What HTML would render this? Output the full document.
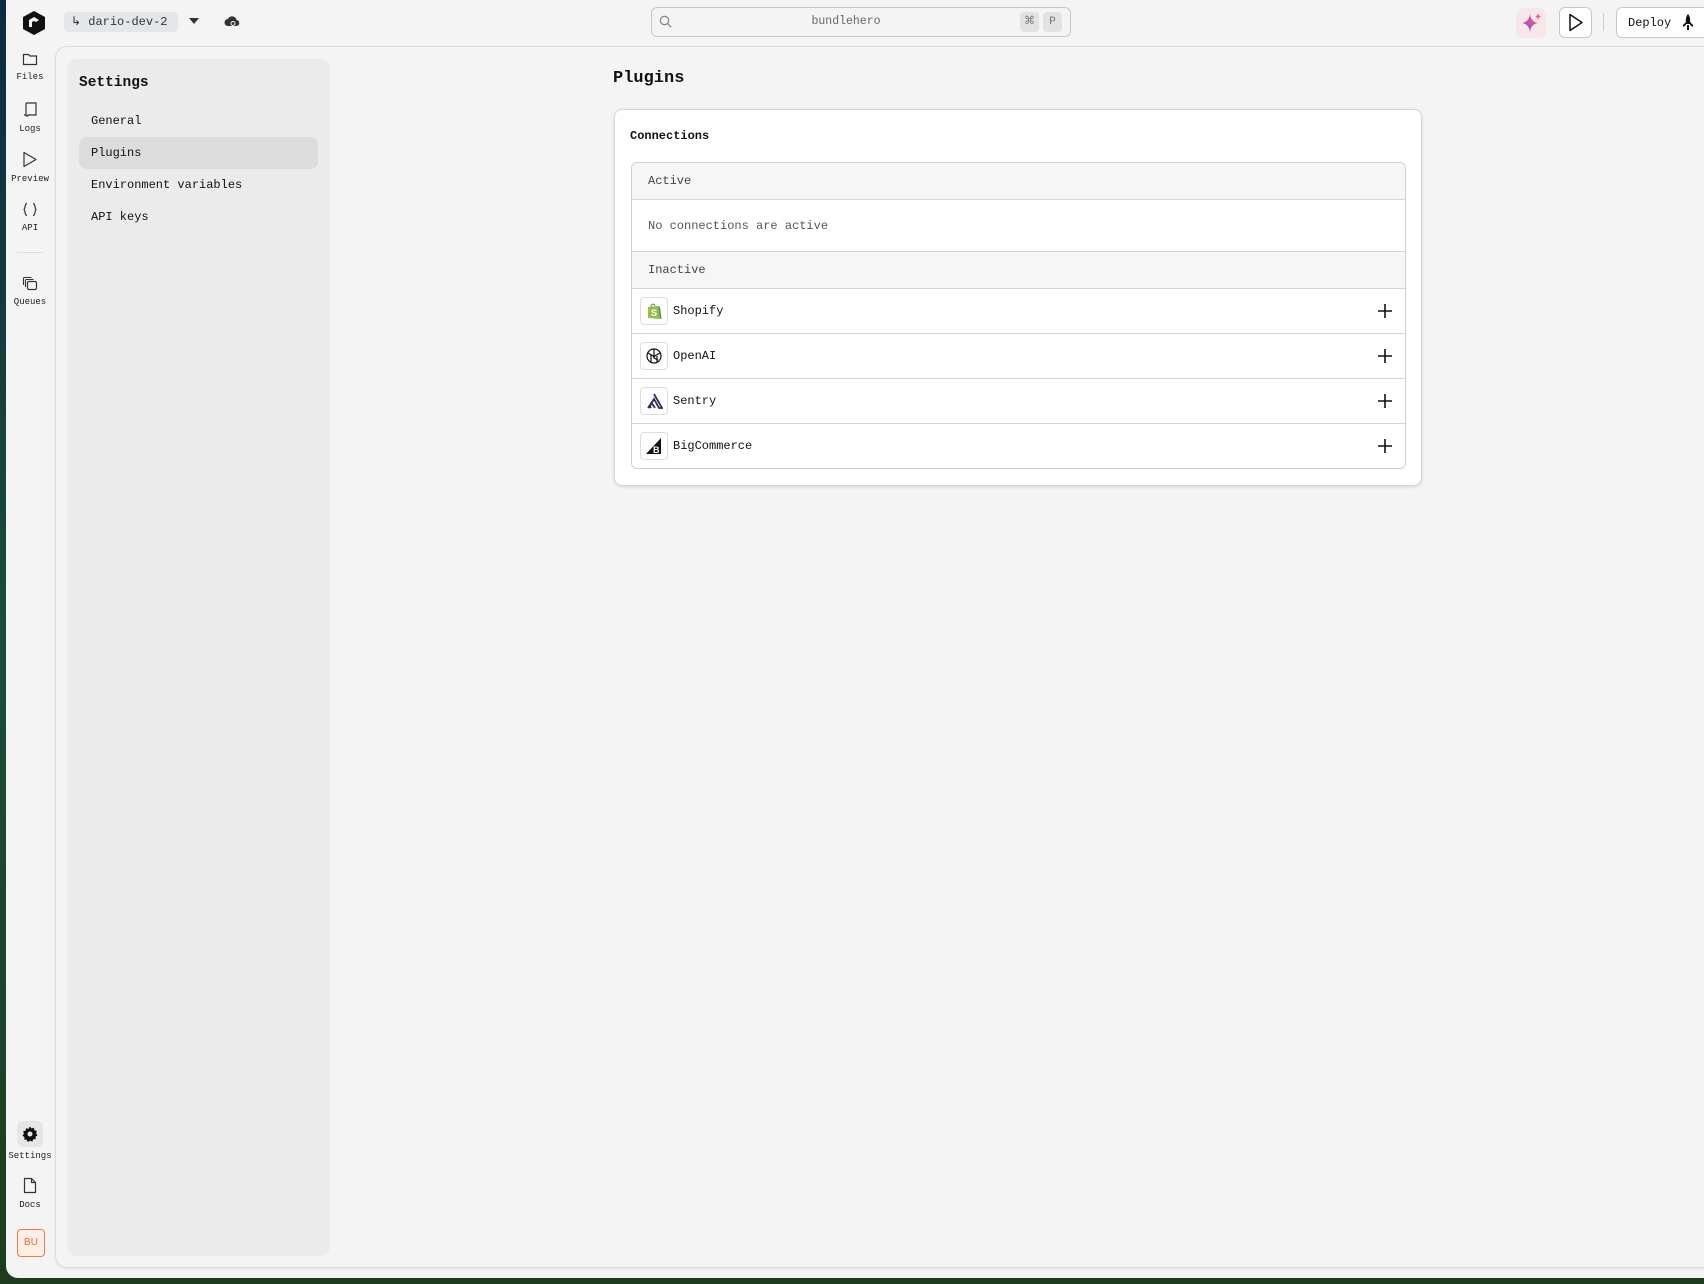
<!DOCTYPE html>
<html><head><meta charset="utf-8"><style>
*{box-sizing:border-box;margin:0;padding:0}
body{width:1704px;height:1284px;overflow:hidden;background:linear-gradient(180deg,#0d2a44 0%,#1a4d3a 50%,#1d3d1d 100%);font-family:"Liberation Mono",monospace;color:#111;position:relative}
.win{position:absolute;left:6px;top:0;width:1698px;height:1278px;background:#f4f4f4;border-bottom-left-radius:12px}
.abs{position:absolute}
.rail{position:absolute;left:0;width:48px;text-align:center;font-size:9px;color:#222}
.rail svg{display:block;margin:0 auto 6px}
.panel{position:absolute;left:55px;top:46px;width:1660px;height:1222px;border:1px solid #dcdcdc;border-radius:12px;background:#f4f4f4;box-shadow:0 1px 2px rgba(0,0,0,.08)}
.side{position:absolute;left:67px;top:59px;width:263px;height:1197px;background:#ebebeb;border-radius:10px}
.nav{position:absolute;left:12px;width:239px;height:32px;line-height:33px;padding-left:12px;font-size:12px;border-radius:8px}
.card{position:absolute;left:614px;top:109px;width:808px;height:377px;background:#fff;border:1px solid #d6d6d6;border-radius:8px;box-shadow:0 1px 3px rgba(0,0,0,.12)}
.tbl{position:absolute;left:16px;top:52px;width:775px;height:307px;border:1px solid #cfcfcf;border-radius:6px;overflow:hidden}
.row{position:absolute;left:0;width:100%;border-bottom:1px solid #d6d6d6;font-size:12px}
.hdr{background:#f6f6f6;color:#444;padding-left:16px}
.ico{position:absolute;left:8px;top:8px;width:28px;height:28px;border:1px solid #ddd;border-radius:4px;display:flex;align-items:center;justify-content:center}
.nm{position:absolute;left:41px;top:0;line-height:45px}
.plus{position:absolute;right:12px;top:14px}
</style></head><body>
<div class="win">
 <svg class="abs" style="left:15px;top:10px" width="26" height="26" viewBox="0 0 26 26"><path d="M13 1L24 7v12l-11 6L2 19V7z" fill="#111"/><path d="M8 17V10l5-3 5 3-3 2-2-1-2 1v5z" fill="#f4f4f4"/></svg>
 <div class="abs" style="left:58px;top:12px;width:114px;height:20px;background:#e3e6ea;border-radius:4px;font-size:12px;line-height:21px;color:#333;padding-left:7px">↳ dario-dev-2</div>
 <svg class="abs" style="left:183px;top:18px" width="10" height="6"><path d="M0 0h10L5 6z" fill="#333"/></svg>
 <svg class="abs" style="left:218px;top:14px" width="16" height="13" viewBox="0 0 16 13"><path d="M4 12a3.5 3.5 0 010-7 4.5 4.5 0 018.5 1A3 3 0 0112 12z" fill="#333"/><circle cx="9" cy="9.5" r="2" fill="none" stroke="#f4f4f4" stroke-width="1"/></svg>
 <div class="abs" style="left:645px;top:7px;width:420px;height:30px;border:1px solid #c8c8c8;border-radius:6px;background:#f4f4f4"></div>
 <svg class="abs" style="left:653px;top:15px" width="13" height="13"><circle cx="5.5" cy="5.5" r="4.2" fill="none" stroke="#888" stroke-width="1.3"/><path d="M8.7 8.7l3.5 3.5" stroke="#888" stroke-width="1.3"/></svg>
 <div class="abs" style="left:640px;top:15px;width:400px;text-align:center;font-size:11.5px;color:#666">bundlehero</div>
 <div class="abs" style="left:1014px;top:12px;width:19px;height:20px;background:#e2e2e2;border-radius:4px;font-size:11px;line-height:20px;text-align:center;color:#777">⌘</div>
 <div class="abs" style="left:1037px;top:12px;width:19px;height:20px;background:#e2e2e2;border-radius:4px;font-size:11px;line-height:20px;text-align:center;color:#777">P</div>
 <div class="abs" style="left:1510px;top:8px;width:30px;height:30px;background:#f7e6ea;border-radius:6px"></div>
 <svg class="abs" style="left:1514px;top:11px" width="24" height="24" viewBox="0 0 24 24"><defs><linearGradient id="g" x1="0" y1="1" x2="1" y2="0"><stop offset="0" stop-color="#8a4fe0"/><stop offset="1" stop-color="#ff5a7a"/></linearGradient></defs><path d="M10 3Q11 11 18 12Q11 13 10 21Q9 13 2 12Q9 11 10 3z" fill="url(#g)"/><path d="M18 2Q18.5 5 21 5.5Q18.5 6 18 9Q17.5 6 15 5.5Q17.5 5 18 2z" fill="#ff5a7a"/></svg>
 <div class="abs" style="left:1553px;top:7px;width:33px;height:31px;border:1px solid #c8c8c8;border-radius:6px;background:#fff"></div>
 <svg class="abs" style="left:1562px;top:13px" width="16" height="19"><path d="M2 1.5L14 9.5 2 17.5z" fill="none" stroke="#111" stroke-width="1.5" stroke-linejoin="round"/></svg>
 <div class="abs" style="left:1597px;top:13px;width:1px;height:18px;background:#d0d0d0"></div>
 <div class="abs" style="left:1610px;top:7px;width:100px;height:31px;border:1px solid #c8c8c8;border-radius:6px;background:#fff;font-size:12px;line-height:30px;padding-left:11px">Deploy</div>
 <svg class="abs" style="left:1676px;top:14px" width="12" height="17" viewBox="0 0 12 17"><path d="M6 0C8 2 8.5 5 8 10H4C3.5 5 4 2 6 0z M4 8L1 11V13L4 11z M8 8l3 3v2L8 11z M5 11h2v5H5z" fill="#111"/></svg>

 <div class="rail" style="top:52px"><svg width="16" height="14" viewBox="0 0 16 14"><path d="M1.5 2.5h5l1.5 1.5h6.5v8.5h-13z" fill="none" stroke="#333" stroke-width="1.2"/></svg>Files</div>
 <div class="rail" style="top:101px"><svg width="16" height="17" viewBox="0 0 16 17"><path d="M4 2h10v10M4 2v12H2M4 14c0 1.5 2 1.5 2 0h8v-2" fill="none" stroke="#333" stroke-width="1.2"/></svg>Logs</div>
 <div class="rail" style="top:151px"><svg width="16" height="17"><path d="M2 1.5L14 8.5 2 15.5z" fill="none" stroke="#333" stroke-width="1.2" stroke-linejoin="round"/></svg>Preview</div>
 <div class="rail" style="top:202px"><svg width="16" height="15"><path d="M5 1.5C2 1.5 4 7.5 1.5 7.5 4 7.5 2 13.5 5 13.5M11 1.5c3 0 1 6 3.5 6-2.5 0-.5 6-3.5 6" fill="none" stroke="#333" stroke-width="1.2"/></svg>API</div>
 <div class="abs" style="left:11px;top:252px;width:26px;height:1px;background:#ddd"></div>
 <div class="rail" style="top:276px"><svg width="16" height="15"><rect x="5.5" y="5.5" width="9" height="8" rx="1.5" fill="none" stroke="#333" stroke-width="1.2"/><path d="M3.5 11V4.5a1 1 0 011-1h7M1.5 9V2.5a1 1 0 011-1h7" fill="none" stroke="#333" stroke-width="1.1"/></svg>Queues</div>
 <div class="abs" style="left:11px;top:1121px;width:26px;height:26px;background:#e6e6e6;border-radius:6px"></div>
 <div class="rail" style="top:1126px"><svg width="16" height="16" viewBox="0 0 16 16" style="margin-bottom:9px"><path d="M8 0.5l1.5 2 2.4-.7.5 2.4 2.4.7-.7 2.4 1.4 1.9-2 1.5.3 2.4-2.5.2-1 2.3L8 14.6 5.7 16l-1-2.3-2.5-.2.3-2.4-2-1.5 1.4-1.9-.7-2.4 2.4-.7.5-2.4 2.4.7z" fill="#111"/><circle cx="8" cy="8" r="2.5" fill="#e6e6e6"/></svg>Settings</div>
 <div class="rail" style="top:1177px"><svg width="14" height="17" viewBox="0 0 14 17"><path d="M1.5 1.5h7l4 4v10h-11z M8.5 1.5v4h4" fill="none" stroke="#333" stroke-width="1.2" stroke-linejoin="round"/></svg>Docs</div>
 <div class="abs" style="left:11px;top:1229px;width:28px;height:28px;border:1px solid #f07a45;background:#fdeee6;border-radius:4px;color:#ee6a30;font-family:'Liberation Sans',sans-serif;font-size:10px;line-height:26px;text-align:center">BU</div>
</div>

<div class="panel"></div>
<div class="side">
 <div class="abs" style="left:12px;top:16px;font-size:14.5px;font-weight:bold">Settings</div>
 <div class="nav" style="top:46px">General</div>
 <div class="nav" style="top:78px;background:#dcdcdc">Plugins</div>
 <div class="nav" style="top:110px">Environment variables</div>
 <div class="nav" style="top:142px">API keys</div>
</div>

<div class="abs" style="left:613px;top:69px;font-size:17px;font-weight:bold">Plugins</div>
<div class="card">
 <div class="abs" style="left:15px;top:19px;font-size:12px;font-weight:bold">Connections</div>
 <div class="tbl">
  <div class="row hdr" style="top:0;height:37px;line-height:37px">Active</div>
  <div class="row" style="top:37px;height:52px;line-height:52px;padding-left:16px;color:#555">No connections are active</div>
  <div class="row hdr" style="top:89px;height:37px;line-height:37px">Inactive</div>
  <div class="row" style="top:126px;height:45px"><div class="ico"><svg width="16" height="18" viewBox="0 0 16 18"><path d="M2 5l10-1 2 13-12-1z" fill="#95bf47"/><path d="M12 4l2 13 1.5-.5L14 5z" fill="#5e8e3e"/><path d="M5 5c0-3 3-4 4-1" fill="none" stroke="#5e8e3e" stroke-width="1"/><text x="5" y="14" font-family="Liberation Sans" font-weight="bold" font-size="9" fill="#fff">S</text></svg></div><div class="nm">Shopify</div><svg class="plus" width="16" height="16"><path d="M8 1v14M1 8h14" stroke="#111" stroke-width="1.6"/></svg></div>
  <div class="row" style="top:171px;height:45px"><div class="ico"><svg width="18" height="18" viewBox="0 0 18 18" fill="none" stroke="#111" stroke-width="1.2"><circle cx="9" cy="9" r="7"/><path d="M9 2v9l4 2M3 6l7 4M15 6l-7 4M6 16V8M12 16V9"/></svg></div><div class="nm">OpenAI</div><svg class="plus" width="16" height="16"><path d="M8 1v14M1 8h14" stroke="#111" stroke-width="1.6"/></svg></div>
  <div class="row" style="top:216px;height:45px"><div class="ico"><svg width="18" height="16" viewBox="0 0 18 16"><path d="M9 1L17 15h-3L9 6 4 15M9 6l-6 9M6 9l4 6M4 12l2 3" fill="none" stroke="#362d59" stroke-width="1.8"/></svg></div><div class="nm">Sentry</div><svg class="plus" width="16" height="16"><path d="M8 1v14M1 8h14" stroke="#111" stroke-width="1.6"/></svg></div>
  <div class="row" style="top:261px;height:46px;border-bottom:none"><div class="ico"><svg width="18" height="18" viewBox="0 0 18 18"><path d="M16 1v16H1z" fill="#121118"/><text x="8" y="16" font-family="Liberation Sans" font-weight="bold" font-size="9" fill="#fff">B</text></svg></div><div class="nm">BigCommerce</div><svg class="plus" width="16" height="16"><path d="M8 1v14M1 8h14" stroke="#111" stroke-width="1.6"/></svg></div>
 </div>
</div>
</body></html>
